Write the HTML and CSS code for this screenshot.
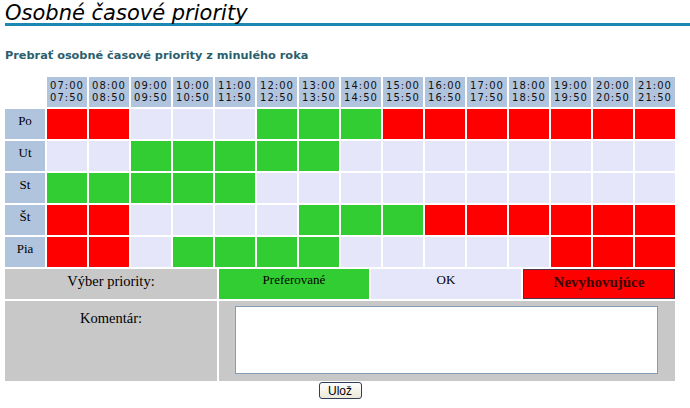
FILE: index.html
```html
<!DOCTYPE html>
<html lang="sk">
<head>
<meta charset="utf-8">
<title>Osobné časové priority</title>
<link rel="stylesheet" href="styles.css">
</head>
<body>
<h1 class="title">Osobné časové priority</h1>
<a class="copy" href="#">Prebrať osobné časové priority z minulého roka</a>
<div class="wrap">
  <div class="grid">
    <div class="corner"></div>
    <div class="h">07:00<br>07:50</div>
    <div class="h">08:00<br>08:50</div>
    <div class="h">09:00<br>09:50</div>
    <div class="h">10:00<br>10:50</div>
    <div class="h">11:00<br>11:50</div>
    <div class="h">12:00<br>12:50</div>
    <div class="h">13:00<br>13:50</div>
    <div class="h">14:00<br>14:50</div>
    <div class="h">15:00<br>15:50</div>
    <div class="h">16:00<br>16:50</div>
    <div class="h">17:00<br>17:50</div>
    <div class="h">18:00<br>18:50</div>
    <div class="h">19:00<br>19:50</div>
    <div class="h">20:00<br>20:50</div>
    <div class="h">21:00<br>21:50</div>

    <div class="day">Po</div>
    <div class="r"></div><div class="r"></div><div class="l"></div><div class="l"></div><div class="l"></div>
    <div class="g"></div><div class="g"></div><div class="g"></div><div class="r"></div><div class="r"></div>
    <div class="r"></div><div class="r"></div><div class="r"></div><div class="r"></div><div class="r"></div>

    <div class="day">Ut</div>
    <div class="l"></div><div class="l"></div><div class="g"></div><div class="g"></div><div class="g"></div>
    <div class="g"></div><div class="g"></div><div class="l"></div><div class="l"></div><div class="l"></div>
    <div class="l"></div><div class="l"></div><div class="l"></div><div class="l"></div><div class="l"></div>

    <div class="day">St</div>
    <div class="g"></div><div class="g"></div><div class="g"></div><div class="g"></div><div class="g"></div>
    <div class="l"></div><div class="l"></div><div class="l"></div><div class="l"></div><div class="l"></div>
    <div class="l"></div><div class="l"></div><div class="l"></div><div class="l"></div><div class="l"></div>

    <div class="day">Št</div>
    <div class="r"></div><div class="r"></div><div class="l"></div><div class="l"></div><div class="l"></div>
    <div class="l"></div><div class="g"></div><div class="g"></div><div class="g"></div><div class="r"></div>
    <div class="r"></div><div class="r"></div><div class="r"></div><div class="r"></div><div class="r"></div>

    <div class="day">Pia</div>
    <div class="r"></div><div class="r"></div><div class="l"></div><div class="g"></div><div class="g"></div>
    <div class="g"></div><div class="g"></div><div class="l"></div><div class="l"></div><div class="l"></div>
    <div class="l"></div><div class="l"></div><div class="r"></div><div class="r"></div><div class="r"></div>
  </div>

  <div class="lower">
    <div class="label">Výber priority:</div>
    <div class="opt pref">Preferované</div>
    <div class="opt ok">OK</div>
    <div class="opt bad">Nevyhovujúce</div>
    <div class="label comment">Komentár:</div>
    <div class="area"><textarea class="ta"></textarea></div>
  </div>
</div>
<div class="actions"><button class="btn" type="button">Ulož</button></div>
</body>
</html>
```
FILE: styles.css
```css
html, body {
  margin: 0;
  padding: 0;
  background: #ffffff;
}

.title {
  margin: 0 0 0 5px;
  padding-top: 3px;
  font-family: "DejaVu Sans", Verdana, sans-serif;
  font-style: italic;
  font-weight: normal;
  font-size: 21px;
  line-height: 20px;
  height: 20px;
  color: #000000;
  border-bottom: 3px solid #1d87b3;
}

.copy {
  display: block;
  margin: 23px 0 0 5px;
  font-family: "DejaVu Sans", Verdana, sans-serif;
  font-weight: bold;
  font-size: 11.3px;
  line-height: 14px;
  height: 26px;
  color: #2b5e6e;
  text-decoration: none;
}

.wrap {
  width: 670px;
  margin-left: 3px;
  padding: 2px 2px 1px 2px;
  display: flex;
  flex-direction: column;
  gap: 2px;
}

.grid {
  display: grid;
  grid-template-columns: repeat(16, 40px);
  grid-auto-rows: 30px;
  gap: 2px;
}

.corner {
  background: #ffffff;
}

.h {
  background: #b0c4de;
  font-family: "DejaVu Sans", Verdana, sans-serif;
  font-size: 10px;
  line-height: 11.7px;
  padding-top: 3px;
  text-align: center;
  color: #111;
  letter-spacing: 1px;
  white-space: nowrap;
}

.day {
  background: #b0c4de;
  font-family: "Liberation Serif", "Times New Roman", serif;
  font-size: 13px;
  line-height: 16px;
  padding-top: 4px;
  text-align: center;
  color: #000;
}

.r { background: #ff0000; }
.g { background: #32cd32; }
.l { background: #e6e6fa; }

.lower {
  display: grid;
  grid-template-columns: 212px 150px 150px 152px;
  grid-template-rows: 30px 80px;
  gap: 2px;
}

.label {
  background: #c8c8c8;
  font-family: "Liberation Serif", "Times New Roman", serif;
  font-size: 14.5px;
  line-height: 17px;
  padding-top: 4px;
  text-align: center;
  color: #000;
}

.label.comment {
  padding-top: 9px;
}

.opt {
  font-family: "Liberation Serif", "Times New Roman", serif;
  font-size: 13px;
  line-height: 16px;
  padding-top: 3px;
  text-align: center;
  color: #000;
}

.pref { background: #32cd32; }
.ok { background: #e6e6fa; }

.bad {
  background: #ff0000;
  border: 1px solid #4e3446;
  font-size: 15px;
  font-weight: bold;
  line-height: 18px;
  padding-top: 3px;
  color: #3a0606;
}

.area {
  grid-column: 2 / 5;
  background: #c8c8c8;
  padding: 5px 17px 0 16px;
}

.ta {
  display: block;
  box-sizing: border-box;
  width: 423px;
  height: 68px;
  margin: 0;
  border: 1px solid #7f9db9;
  background: #ffffff;
  resize: none;
}

.actions {
  width: 674px;
  margin-left: 3px;
  display: flex;
  justify-content: center;
}

.btn {
  box-sizing: border-box;
  width: 43px;
  height: 17px;
  padding: 0;
  font-family: "Liberation Sans", Arial, sans-serif;
  font-size: 12px;
  line-height: 14px;
  color: #000;
  background: linear-gradient(#ffffff, #ece9d8);
  border: 1px solid #2c3e5a;
  border-radius: 3px;
}
```
